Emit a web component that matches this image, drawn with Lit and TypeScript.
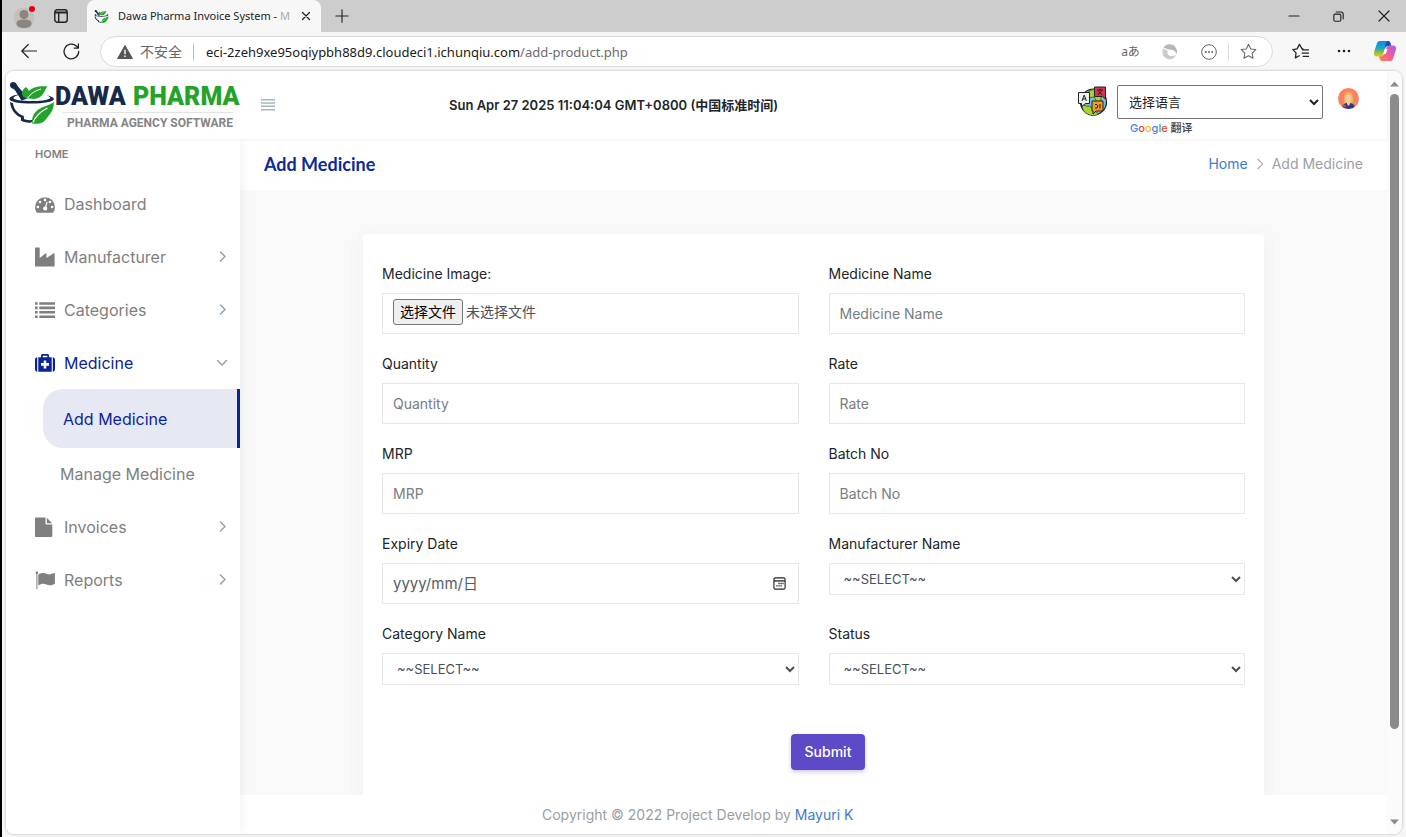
import { LitElement, html, svg, css, nothing, TemplateResult } from "lit";
import { customElement, state } from "lit/decorators.js";
import { classMap } from "lit/directives/class-map.js";

const line = (d: string, size = 16, width = 1.2) => html`<svg
  width=${size} height=${size} viewBox="0 0 16 16" fill="none" stroke="currentColor"
  stroke-width=${width} stroke-linecap="round" stroke-linejoin="round" aria-hidden="true"
><path d=${d}></path></svg>`;

const STAR = "M8 1.2 10.1 5.6 14.9 6.2 11.4 9.5 12.3 14.3 8 12 3.7 14.3 4.6 9.5 1.1 6.2 5.9 5.6Z";

const solid = (body: TemplateResult) => html`<svg
  width="20" height="20" viewBox="0 0 20 20" fill="currentColor" aria-hidden="true">${body}</svg>`;

const menuIcons: Record<string, TemplateResult> = {
  gauge: solid(svg`
    <path d="M10 3.2a9.9 9.9 0 0 0-9.9 9.9c0 1.9.5 3.7 1.4 5.2.1.2.4.4.7.4h15.6c.3 0 .6-.2.7-.4.9-1.500 1.400-3.300 1.400-5.200A9.900 9.900 0 0 0 10 3.200Z"></path>
    <g fill="#fff"><circle cx="2.900" cy="13" r="1.350"></circle><circle cx="5" cy="8" r="1.350"></circle>
    <circle cx="10" cy="5.900" r="1.350"></circle><circle cx="15" cy="8" r="1.350"></circle><circle cx="17.100" cy="13" r="1.350"></circle>
    <path d="M11.300 8.200c.1-.5.4-.6.8-.5.4.1.5.4.4.8l-1.100 4.200c.7.5 1.100 1.400.8 2.300a2.100 2.100 0 1 1-2.100-2.600Z"></path></g>`),
  factory: solid(svg`<path d="M.4.6h3.900c.2 0 .4.200.4.400v9.900l6-4.600c.300-.2.700 0 .7.400v4.200l7.500-4.600c.300-.2.700 0 .7.400v12.500c0 .200-.2.400-.4.400H.4a.4.400 0 0 1-.4-.4V1c0-.2.200-.4.400-.4Z"></path>`),
  list: solid(svg`<path d="M0 2.200h2.700v2.600H0zM4.300 2.200H20v2.600H4.300zM0 6.600h2.700v2.600H0zM4.300 6.600H20v2.600H4.300zM0 11h2.700v2.600H0zM4.300 11H20v2.600H4.300zM0 15.400h2.700V18H0zM4.300 15.400H20V18H4.300z"></path>`),
  medkit: solid(svg`
    <path d="M0 6.700c0-1.400.9-2.500 2.200-2.500v14.500C.9 18.700 0 17.600 0 16.200ZM20 6.700c0-1.400-.9-2.500-2.200-2.500v14.500c1.300 0 2.200-1.100 2.200-2.500Z"></path>
    <path fill-rule="evenodd" d="M3.300 4.200H6V2.500C6 1.600 6.600 1 7.500 1h5c.9 0 1.500.6 1.500 1.500v1.700h2.700v14.500H3.300ZM7.700 2.700v1.500h4.600V2.700ZM8.700 7.500v2.600H6v2.700h2.700v2.600h2.600v-2.600H14v-2.700h-2.700V7.500Z"></path>`),
  file: solid(svg`<path d="M0 1.400C0 .9.4.5.900.5h9.600v6c0 .5.4.900.9.900h5.900v11.700c0 .5-.4.900-.9.900H.9a.9.900 0 0 1-.9-.9ZM11.800.7l5.300 5.500h-5.300Z"></path>`),
  flag: solid(svg`<circle cx="1.900" cy="2.700" r="1.300"></circle><path d="M1.400 3h1v16.200h-1ZM3.300 4.500c1.500-1 3-1.500 4.700-1.500 2.700 0 4 1.400 6.200 1.400 2 0 3.500-.8 4.800-1.300.5-.2.900.1.900.600v9.500c0 .4-.2.600-.5.800-1.400.700-2.900 1.300-4.500 1.300-2.700 0-4.100-1.600-6.700-1.600-1.500 0-3.200.6-4.900 1.500Z"></path>`),
};

const mortar = (width: number, height: number) => html`<svg width=${width} height=${height} viewBox="0 0 48 44" aria-hidden="true">
  <path d="M2 4.500C1.500 1.500 5.500-.3 8 2.300c.9 1 1 2.100 2.200 3.400L20 17.200l-6.500 2.400L7 9.300C5.900 7.500 2.500 7.800 2 4.500Z" fill="#15294b"></path>
  <path d="M17 17c1-6 6-10.500 14-11.500 3-.4 5.600-.3 8.500 0-2.200 2.500-2.500 4.800-4.500 7.600-2 2.900-5 4.600-9.500 4.900Z" fill="#24a32b"></path>
  <path d="M16 16.500c-3-3-3-6.500 1.800-10.600 3.600 2.800 4.400 6.500 2.200 10.100Z" fill="#24a32b"></path>
  <path d="M19 17.500c4-5 8-8 14-9.500" stroke="#fff" fill="none" stroke-width="1"></path>
  <path d="M13 13.200C5 14 .8 16 1.400 18.200c.7 2.700 10 4.300 22 4.300 13 0 21.500-1.700 22.400-4.300.5-1.600-2-2.900-6.800-3.800 3.500 1.300 4 2.500 2.300 3.400-2.800 1.500-9.500 2.300-17.900 2.300-9.900 0-17.800-1.200-18-3C5.300 15.900 8 14.500 13 13.200Z" fill="#15294b"></path>
  <path d="M2 21c.7 7 4.600 13 11 15.500v3.300c3 1.600 6.500 2 10 2l2-2.700c-4.800.3-7 0-9-1l-.2-3C9.500 32.700 5.700 28.500 5 22.300Z" fill="#15294b"></path>
  <path d="M24 42.500c-.5-7 2.500-12.500 9-15.500 4.500-2 9.500-3.500 12.800-6 .2 5-1.300 9.500-4.700 13.200-2.100 2.300-3 4.800-5.500 6.500-3 2-7 2.500-11.600 1.800Z" fill="#24a32b"></path>
  <path d="M25 41.500c2.500-6.500 7-10.600 14.500-14.500" stroke="#fff" fill="none" stroke-width="1.300"></path>
</svg>`;

@customElement("browser-chrome")
class BrowserChrome extends LitElement {
  static styles = css`
    :host { display: block; flex: none; color: #222; font: 13px/18px "Noto Sans", "Noto Sans CJK SC", sans-serif; }
    button { border: 0; padding: 0; background: none; color: inherit; font: inherit; display: inline-flex; align-items: center; justify-content: center; }
    .tabs { display: flex; align-items: center; height: 32px; background: #cdcdcd; }
    .profile { width: 44px; height: 32px; }
    .workspace { width: 41px; height: 32px; padding-right: 12px; }
    .tab { display: flex; align-items: center; box-sizing: border-box; width: 234px; height: 32px; padding: 0 8px 0 7px; gap: 9px; background: #f7f7f7; border-radius: 8px 8px 0 0; }
    .name { flex: 1; white-space: nowrap; font-size: 11px; }
    .fade { color: #aaa; }
    .close { width: 14px; height: 14px; }
    .new { width: 42px; height: 32px; }
    .spacer { flex: 1; }
    .window { width: 45px; height: 32px; }
    .bar { display: flex; align-items: center; height: 38px; background: #f7f7f7; padding-right: 10px; }
    .nav { width: 43px; height: 32px; padding-left: 10px; }
    .address { display: flex; align-items: center; flex: 1; box-sizing: border-box; height: 31px; margin: 1px 6px 0 12px; padding: 0 19px 0 16px; border: 1px solid #dadada; border-radius: 16px; background: #fff; }
    .insecure { color: #666; font-size: 14px; gap: 7px; }
    .rule { width: 1px; height: 16px; margin: 0 12px 0 11px; background: #bbb; }
    .url { flex: 1; white-space: nowrap; color: #1a1a1a; }
    .path { color: #6b6b6b; }
    .tool { width: 39px; height: 28px; color: #666; }
    .lang { font-size: 12px; }
    .thin { width: 1px; height: 18px; background: #ddd; }
    .fav { margin-right: -15px; }
    .side { width: 43px; height: 32px; }
    .copilot { width: 22px; margin-left: 9px; }
  `;
  render() {
    return html`
      <div class="tabs">
        <button class="profile" aria-label="Profile"><svg width="24" height="26" viewBox="0 0 24 26">
          <circle cx="12" cy="15" r="10.500" fill="#c3bfbb"></circle><circle cx="12" cy="11.500" r="4.500" fill="#8b8581"></circle>
          <path d="M4.500 20.500c0-3 3-4 7.500-4s7.500 1 7.500 4-3 4.500-7.500 4.500-7.500-1.500-7.500-4.500Z" fill="#8b8581"></path>
          <circle cx="20" cy="6" r="3" fill="#e3000f"></circle></svg></button>
        <button class="workspace" aria-label="Tab actions"><svg width="14" height="14" viewBox="0 0 14 14" fill="none" stroke="#222" stroke-width="1.400">
          <rect x=".8" y=".8" width="12.400" height="12.400" rx="2.500"></rect><path d="M1 3.500h12" stroke-width="2"></path><path d="M4.700 4v9"></path></svg></button>
        <div class="tab">${mortar(16, 15)}<span class="name">Dawa Pharma Invoice System - <span class="fade">M</span></span>
          <button class="close" aria-label="Close tab">${line("M4 4 12 12M12 4 4 12", 14, 1.500)}</button></div>
        <button class="new" aria-label="New tab">${line("M8 1V15M1 8H15", 14, 1.300)}</button>
        <span class="spacer"></span>
        <button class="window" aria-label="Minimize">${line("M3 8H13", 16, 1.200)}</button>
        <button class="window" aria-label="Restore">${line("M3 7Q3 5.500 4.500 5.500H9Q10.500 5.500 10.500 7V11.500Q10.500 13 9 13H4.500Q3 13 3 11.500ZM5.500 3.200H10.500Q13 3.200 13 5.500V10.500", 15, 1.200)}</button>
        <button class="window" aria-label="Close">${line("M3 3 13 13M13 3 3 13", 16, 1.200)}</button>
      </div>
      <div class="bar">
        <button class="nav" aria-label="Back">${line("M15.500 8H.8M7.200 1.500.8 8 7.200 14.500", 16, 1.200)}</button>
        <button class="nav" aria-label="Reload">${line("M14.800 8A6.900 6.900 0 1 1 12.800 3.100L14.300 4.600M14.500 .8V4.800H10.500", 17, 1.200)}</button>
        <div class="address">
          <button class="insecure"><svg width="16" height="14" viewBox="0 0 16 14"><path d="M8 .6 15.400 13.500H.6Z" fill="#555" stroke="#555" stroke-linejoin="round"></path><path d="M7.300 4.800h1.400v4.500H7.300zM7.300 10.500h1.400V12H7.300z" fill="#fff"></path></svg>不安全</button>
          <span class="rule"></span>
          <span class="url">eci-2zeh9xe95oqiypbh88d9.cloudeci1.ichunqiu.com<span class="path">/add-product.php</span></span>
          <button class="tool lang">aあ</button>
          <button class="tool" aria-label="Assistant"><svg width="16" height="16" viewBox="0 0 16 16" fill="none">
            <path d="M1.500 3.500C4-.3 10-.8 13 2.800c1.800 2 2.600 4.500 1.800 7.200-1.200-2.700-3-4.200-6-4.300C6 5.700 4 4.500 1.500 3.500Z" fill="#b5b5b5"></path>
            <path d="M1 4.500c2 1 3.800 1.500 4.800 2.200-1 2.500.2 4.800 2.500 5.300 2.300.4 4.500-.4 5.900-1.500C13 14 9.500 16.200 5.500 15 1 13.500-.8 8.500 1 4.500Z" fill="#cbcbcb"></path></svg></button>
          <button class="tool" aria-label="More actions"><svg width="16" height="16" viewBox="0 0 16 16"><circle cx="8" cy="8" r="7.300" fill="none" stroke="#666"></circle><g fill="#666"><circle cx="4.800" cy="8" r="1"></circle><circle cx="8" cy="8" r="1"></circle><circle cx="11.200" cy="8" r="1"></circle></g></svg></button>
          <span class="thin"></span>
          <button class="tool fav" aria-label="Add to favorites">${line(STAR, 17, 1)}</button>
        </div>
        <button class="side" aria-label="Favorites">${line("M10.300 5.600 9.500 5.500 7 1.200 4.800 5.500.8 6.200 3.800 9.300 3.200 14 6.800 12M10 6.500H15.500M9.500 9.500H15.500M10.500 12.500H15.500", 17, 1.200)}</button>
        <button class="side" aria-label="Settings"><svg width="16" height="4" viewBox="0 0 16 4" fill="#222"><circle cx="3" cy="2" r="1.300"></circle><circle cx="8" cy="2" r="1.300"></circle><circle cx="13" cy="2" r="1.300"></circle></svg></button>
        <button class="copilot" aria-label="Copilot"><svg width="22" height="20" viewBox="0 0 22 20">
          <defs>
            <linearGradient id="cool" x1="0" y1="0" x2="0" y2="1"><stop stop-color="#1688e8"></stop><stop offset=".45" stop-color="#15a9c4"></stop><stop offset=".75" stop-color="#8fc43c"></stop><stop offset="1" stop-color="#f7c516"></stop></linearGradient>
            <linearGradient id="warm" x1="1" y1="0" x2="0" y2="1"><stop stop-color="#a45cf0"></stop><stop offset=".5" stop-color="#ef5ba1"></stop><stop offset="1" stop-color="#ff8a3c"></stop></linearGradient>
          </defs>
          <path d="M6 0h8c1.500 0 2 1 2.500 2.500L17 5h-3c-2 0-2.600 1-3 2.500L9.500 13C9 15 8 15.500 6.500 15.500H3c-2.500 0-3.500-2-2.800-4.500L2.700 3C3.300 1 4.300 0 6 0Z" fill="url(#cool)"></path>
          <path d="M16 20H8c-1.500 0-2-1-2.500-2.500L5 15.300h2c2 0 2.600-1 3-2.500L12.500 7C13 5 14 4.500 15.500 4.500H19c2.500 0 3.500 2 2.800 4.500l-2.500 8c-.6 2-1.600 3-3.300 3Z" fill="url(#warm)"></path>
          <path d="M14 0c1.500 0 2 1 2.500 2.500L17 4.500h-2.500c-1.500 0-2.500 1-3 3C11 3 11.500 1 14 0Z" fill="#1e49b8"></path>
          <path d="M10.800 8h2.800l-1.800 5H9.200Z" fill="#fff"></path></svg></button>
      </div>`;
  }
}

type Entry = { label: string; icon: string; arrow?: boolean; children?: string[] };
const MENU: Entry[] = [
  { label: "Dashboard", icon: "gauge" },
  { label: "Manufacturer", icon: "factory", arrow: true },
  { label: "Categories", icon: "list", arrow: true },
  { label: "Medicine", icon: "medkit", arrow: true, children: ["Add Medicine", "Manage Medicine"] },
  { label: "Invoices", icon: "file", arrow: true },
  { label: "Reports", icon: "flag", arrow: true },
];

@customElement("side-menu")
class SideMenu extends LitElement {
  @state() open = "Medicine";
  static styles = css`
    :host { display: block; flex: none; width: 234px; background: #fff; box-shadow: 1px 0 12px rgba(0, 0, 0, 0.06); font: 16px/24px Inter, sans-serif; color: #7f7f7f; z-index: 1; }
    .heading { margin: 0; padding: 7px 29px 15px; font-size: 11px; line-height: 16px; font-weight: 600; }
    ul { list-style: none; margin: 0; padding: 0; }
    a { color: inherit; text-decoration: none; }
    .item { display: flex; align-items: center; box-sizing: border-box; height: 53px; padding: 0 10px 0 29px; gap: 9px; }
    .text { flex: 1; }
    .open { color: #0c2496; }
    .arrow { color: #8fa3ad; display: flex; }
    .sub { display: flex; align-items: center; height: 52px; padding-left: 54px; }
    .current { height: 59px; margin-left: 37px; padding-left: 20px; border-right: 3px solid #0c2496; border-radius: 20px 0 0 20px; background: #e6e8f3; color: #0c2496; }
  `;
  render() {
    return html`<nav>
      <h2 class="heading">HOME</h2>
      <ul>${MENU.map((m) => {
        const open = m.label === this.open;
        return html`<li>
          <a href="#" class=${classMap({ item: true, open })}>${menuIcons[m.icon]}<span class="text">${m.label}</span>
            ${m.arrow ? html`<span class="arrow">${open ? line("M3.500 5.500 8 10 12.500 5.500", 16, 1.500) : line("M6.500 3 11 7.500 6.500 12", 16, 1.500)}</span>` : nothing}</a>
          ${m.children ? html`<ul>${m.children.map((c, i) => html`<li><a href="#" class=${classMap({ sub: true, current: i === 0 })}>${c}</a></li>`)}</ul>` : nothing}
        </li>`;
      })}</ul></nav>`;
  }
}

type Field = { id: string; label: string; kind: "file" | "text" | "date" | "select" };
const FIELDS: Field[] = [
  { id: "image", label: "Medicine Image:", kind: "file" },
  { id: "name", label: "Medicine Name", kind: "text" },
  { id: "quantity", label: "Quantity", kind: "text" },
  { id: "rate", label: "Rate", kind: "text" },
  { id: "mrp", label: "MRP", kind: "text" },
  { id: "batch", label: "Batch No", kind: "text" },
  { id: "expiry", label: "Expiry Date", kind: "date" },
  { id: "manufacturer", label: "Manufacturer Name", kind: "select" },
  { id: "category", label: "Category Name", kind: "select" },
  { id: "status", label: "Status", kind: "select" },
];

@customElement("medicine-form")
class MedicineForm extends LitElement {
  static styles = css`
    :host { display: block; box-sizing: border-box; min-height: 100%; padding: 30px 19px; border-radius: 4px; background: #fff; box-shadow: 0 5px 20px rgba(90, 70, 200, 0.05); font: 14px/20px Inter, "Noto Sans CJK SC", sans-serif; color: #212529; }
    .grid { display: grid; grid-template-columns: 1fr 1fr; column-gap: 30px; row-gap: 20px; align-items: start; }
    .field { display: flex; flex-direction: column; gap: 9px; }
    .control { box-sizing: border-box; width: 100%; height: 41px; padding: 0 10px; border: 1px solid #e7e7e7; border-radius: 0; outline: 0; background: #fff; color: #495057; font: inherit; }
    .control::placeholder { color: #777d82; opacity: 1; }
    select.control { height: 32px; font-size: 13px; }
    .box { display: flex; align-items: center; }
    .picker { gap: 3px; padding-bottom: 3px; }
    .hidden { position: absolute; width: 1px; height: 1px; opacity: 0; }
    .choose { border: 1px solid #767676; border-radius: 3px; background: #efefef; color: #000; padding: 2px 6px; }
    .date { flex: 1; min-width: 0; border: 0; outline: 0; padding: 0; background: none; font: inherit; font-size: 15px; color: #495057; }
    .date::placeholder { color: #565d64; opacity: 1; }
    .calendar { border: 0; padding: 0 2px; background: none; display: flex; color: #222; }
    .actions { display: flex; justify-content: center; margin-top: 49px; padding-left: 29px; }
    .submit { height: 36px; padding: 0 14px; border: 0; border-radius: 4px; background: #5c4ac7; color: #fff; font: inherit; font-weight: 500; box-shadow: 0 2px 4px rgba(92, 74, 199, 0.3); }
  `;
  control(f: Field) {
    if (f.kind === "file")
      return html`<label class="control box picker"><input id=${f.id} class="hidden" type="file"><span class="choose">选择文件</span><span>未选择文件</span></label>`;
    if (f.kind === "date")
      return html`<div class="control box"><input id=${f.id} class="date" placeholder="yyyy/mm/日">
        <button class="calendar" type="button" aria-label="Open calendar"><svg width="13" height="13" viewBox="0 0 14 14" fill="none" stroke="currentColor" stroke-width="1.200">
          <rect x="1" y="1" width="12" height="12" rx="1.500"></rect><path d="M1 4.200h12" stroke-width="1.400"></path><path d="M5.800 7h1.400M8 7h1.400M10.200 7h1.200M3.500 9.500h1.400M5.800 9.500h1.400M8 9.500h1.400" stroke-width="1.400"></path></svg></button></div>`;
    if (f.kind === "select")
      return html`<select id=${f.id} class="control"><option>~~SELECT~~</option></select>`;
    return html`<input id=${f.id} class="control" placeholder=${f.label}>`;
  }
  render() {
    return html`<form @submit=${(e: Event) => e.preventDefault()}>
      <div class="grid">${FIELDS.map((f) => html`<div class="field"><label for=${f.id}>${f.label}</label>${this.control(f)}</div>`)}</div>
      <div class="actions"><button class="submit">Submit</button></div>
    </form>`;
  }
}

@customElement("app-root")
class AppRoot extends LitElement {
  static styles = css`
    :host { display: flex; flex-direction: column; box-sizing: border-box; height: 100vh; border-left: 2px solid #000; background: #f7f7f7; font: 14px/20px Inter, "Noto Sans CJK SC", sans-serif; color: #212529; }
    a { color: #3e7cc9; text-decoration: none; }
    .frame { display: flex; flex: 1; min-height: 0; margin: 1px 4px 3px; border-radius: 8px; overflow: hidden; background: #fff; box-shadow: 0 0 2px 1px #d6d6d6; }
    .site { display: flex; flex-direction: column; flex: 1; min-width: 0; }
    .top { display: flex; align-items: center; flex: none; height: 68px; position: relative; z-index: 2; background: #fff; box-shadow: 0 1px 3px rgba(0, 0, 0, 0.06); }
    .logo { display: flex; flex: none; padding: 3px 0 0 2px; }
    .word { font: 900 25px Roboto, sans-serif; }
    .tagline { font: 700 12px Roboto, sans-serif; fill: #858585; }
    .navy { fill: #15294b; }
    .leaf { fill: #24a32b; }
    .toggle { display: flex; border: 0; padding: 0; margin-left: 21px; background: none; color: #a5b5be; }
    .clock { margin-left: 174px; flex: 1; font-size: 13px; font-weight: 600; white-space: nowrap; }
    .tools { display: flex; align-items: flex-start; padding: 14px 28px 0 0; height: 54px; }
    .globe { margin: 1px 9px 0 0; }
    .lang { display: block; box-sizing: border-box; width: 206px; height: 34px; padding: 0 0 2px 7px; border: 1px solid #767676; border-radius: 2px; background: #fff; color: #222; font: 13px "Noto Sans CJK SC", sans-serif; }
    .credit { display: block; padding-left: 13px; font-size: 11px; line-height: 18px; font-weight: 500; color: #444; }
    .avatar { margin: 3px 0 0 15px; }
    .b { color: #4285f4; } .r { color: #ea4335; } .y { color: #fbbc05; } .g { color: #34a853; }
    .body { display: flex; flex: 1; min-height: 0; }
    .content { display: flex; flex-direction: column; flex: 1; min-width: 0; background: #f9f9f9; }
    .titlebar { display: flex; align-items: center; justify-content: space-between; flex: none; box-sizing: border-box; height: 51px; padding: 0 24px 2px; background: #fff; }
    .title { margin: 0; font: 700 18px/24px Lato, sans-serif; color: #0c2b96; }
    .crumbs { display: flex; align-items: center; gap: 5px; color: #9a9fa3; }
    .main { flex: 1; min-height: 0; overflow: hidden; padding: 44px 123px 0; }
    .footer { flex: none; height: 39px; line-height: 39px; padding-left: 302px; background: #fff; color: #99a0a3; }
    .scroll { display: flex; flex-direction: column; align-items: center; width: 15px; box-sizing: border-box; padding: 10px 0 9px; background: #fbfbfb; color: #8b8b8b; }
    .thumb { flex: 634; width: 9px; margin-top: 7px; border-radius: 5px; background: #8b8b8b; }
    .rest { flex: 90; }
  `;
  render() {
    return html`
      <browser-chrome></browser-chrome>
      <div class="frame">
        <div class="site">
          <header class="top">
            <a class="logo" href="#" aria-label="Dawa Pharma"><svg width="232" height="52" viewBox="0 0 232 52">
              <g>${mortar(48, 44)}</g>
              <text x="47" y="24" class="word navy">DAWA</text>
              <text x="125" y="24" class="word leaf">PHARMA</text>
              <path d="M55 31.500H225" stroke="#e3e3e3"></path>
              <text x="59" y="46" class="tagline">PHARMA AGENCY SOFTWARE</text>
            </svg></a>
            <button class="toggle" aria-label="Toggle menu"><svg width="14" height="12" viewBox="0 0 14 12" fill="currentColor"><path d="M0 0h14v1.500H0zM0 3.300h14v1.500H0zM0 6.600h14v1.500H0zM0 9.900h14v1.500H0z"></path></svg></button>
            <span class="clock">Sun Apr 27 2025 11:04:04 GMT+0800 (中国标准时间)</span>
            <div class="tools">
              <svg class="globe" width="31" height="31" viewBox="0 0 31 31" aria-hidden="true">
                <circle cx="16.500" cy="16" r="13" fill="#6ec3d6" stroke="#222" stroke-width="1.200"></circle>
                <path d="M5 19c3 0 5 2 8 1l3 4 6 4c-6 3-13 1-16-4ZM12 5c4-2 8-2 12 1v9l-4 1-3-5-6 1Z" fill="#a5d62c" stroke="#333" stroke-width=".7"></path>
                <path d="M1.500 6.500h11v11h-4l-4 3v-3h-3Z" fill="#f1f1f1" stroke="#222"></path>
                <path d="M17.500 1h11v12l-3-2.500h-8Z" fill="#d8344c" stroke="#222"></path>
                <path d="M15 15h11v10h-7l-3 3v-3h-1Z" fill="#f39a2d" stroke="#222"></path>
                <path d="M5 15l2.200-6 2.200 6M5.800 13h3M20 4h6M23 2.800V4M21 9l4-5M21 5l4.500 4M18 18.500h2M18 22h2l1-3M23 18v4.500" stroke="#222" fill="none"></path>
              </svg>
              <div>
                <select class="lang" aria-label="Language"><option>选择语言</option></select>
                <span class="credit"><span class="b">G</span><span class="r">o</span><span class="y">o</span><span class="b">g</span><span class="g">l</span><span class="r">e</span> 翻译</span>
              </div>
              <svg class="avatar" width="21" height="21" viewBox="0 0 21 21" aria-hidden="true">
                <clipPath id="round"><circle cx="10.500" cy="10.500" r="10.500"></circle></clipPath>
                <g clip-path="url(#round)"><path d="M0 0h21v21H0z" fill="#ff7f61"></path>
                <path d="M4 21c0-4 2-6 6.500-6s6.500 2 6.500 6Z" fill="#2d3c8a"></path>
                <path d="M6 15c-.8-6 .3-11 4.500-11S15.800 9 15 15Z" fill="#e3b563"></path>
                <ellipse cx="10.500" cy="10.500" rx="3" ry="4" fill="#f5c9a0"></ellipse><path d="M9 14h3v2l-1.500 2L9 16Z" fill="#f5c9a0"></path><path d="M5 17h3v2H5z" fill="#e23b4e"></path></g>
              </svg>
            </div>
          </header>
          <div class="body">
            <side-menu></side-menu>
            <div class="content">
              <div class="titlebar"><h1 class="title">Add Medicine</h1>
                <nav class="crumbs"><a href="#">Home</a>${line("M5.500 2.500 11 8 5.500 13.500", 14, 1.200)}<span>Add Medicine</span></nav></div>
              <main class="main"><medicine-form></medicine-form></main>
              <footer class="footer">Copyright © 2022 Project Develop by <a href="#">Mayuri K</a></footer>
            </div>
          </div>
        </div>
        <div class="scroll" aria-hidden="true">
          <svg width="9" height="6" viewBox="0 0 9 6" fill="currentColor"><path d="M4.500.5 9 5.500H0Z"></path></svg>
          <div class="thumb"></div><div class="rest"></div>
          <svg width="9" height="6" viewBox="0 0 9 6" fill="currentColor"><path d="M4.500 5.500 9 .5H0Z"></path></svg>
        </div>
      </div>`;
  }
}
